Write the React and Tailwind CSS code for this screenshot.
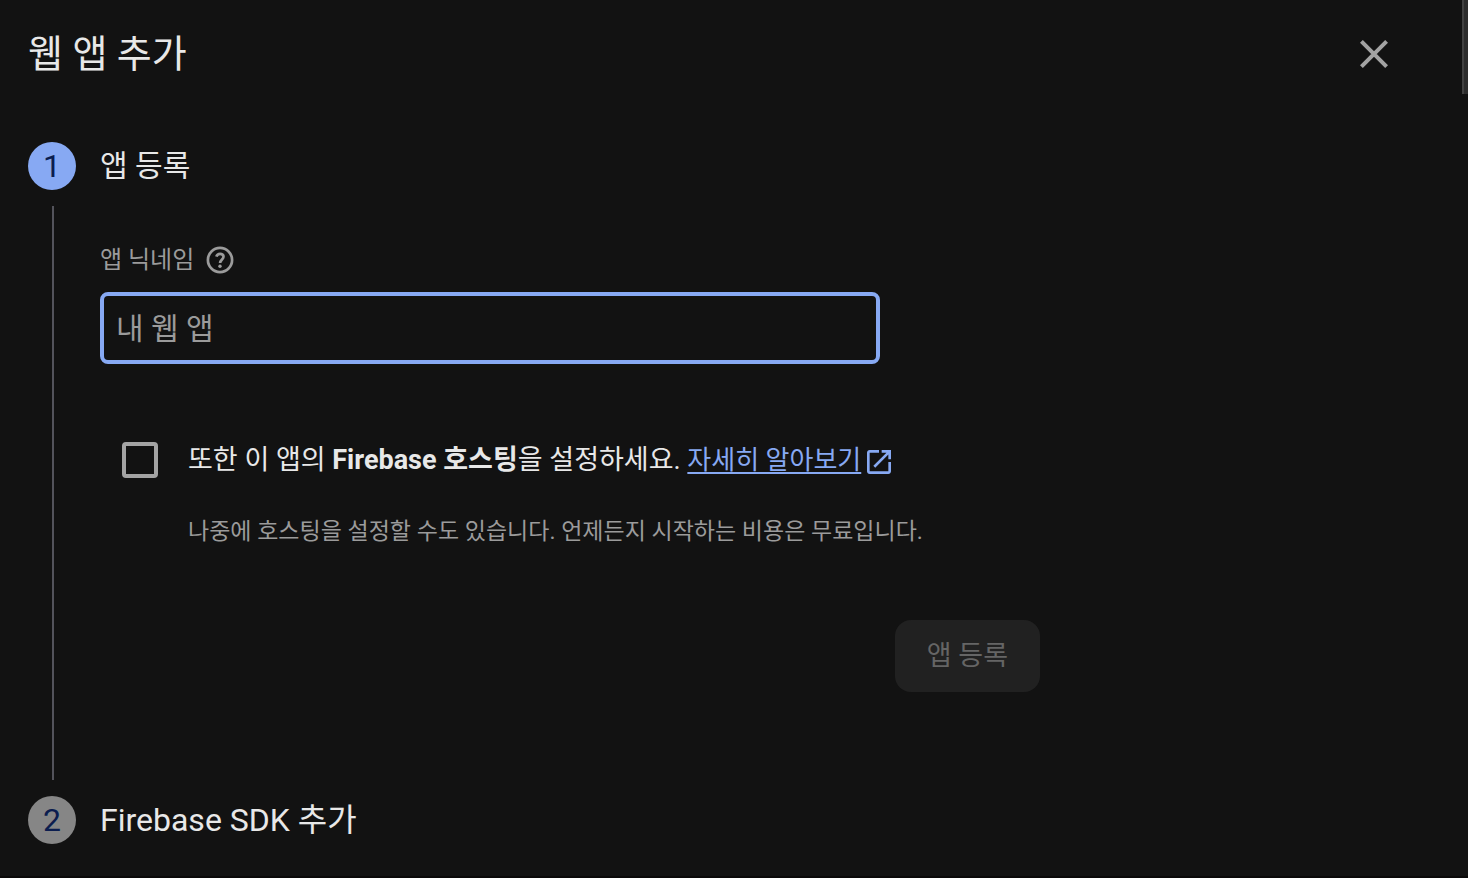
import React from "react";

function StepBadge({ number, active }) {
  return (
    <span
      className={
        "flex size-12 shrink-0 items-center justify-center rounded-full text-[32px] leading-none text-[#0b1d4f] " +
        (active ? "bg-[#87a9f3]" : "bg-[#868686]")
      }
    >
      {number}
    </span>
  );
}

function CloseIcon() {
  return (
    <svg viewBox="0 0 28 28" className="size-7" fill="none" stroke="currentColor" strokeWidth="4" aria-hidden="true">
      <path d="M1.4 1.4 26.6 26.6M26.6 1.4 1.4 26.6" />
    </svg>
  );
}

function HelpIcon() {
  return (
    <svg viewBox="0 0 32 32" className="size-8" fill="none" stroke="currentColor" strokeWidth="2.7" aria-hidden="true">
      <circle cx="16" cy="16" r="12.1" />
      <path d="M12.400 12.700C12.900 10.800 14.200 9.800 16.100 9.800C18.200 9.800 19.500 11.100 19.500 12.800C19.500 15.300 16.100 15.700 16.100 19.100" />
      <circle cx="16" cy="22.200" r="1.700" fill="currentColor" stroke="none" />
    </svg>
  );
}

function ExternalIcon() {
  return (
    <svg viewBox="0 0 24 24" className="mt-1 size-8" fill="currentColor" aria-hidden="true">
      <path d="M19 19H5V5h7V3H5c-1.110 0-2 .9-2 2v14c0 1.100.89 2 2 2h14c1.100 0 2-.9 2-2v-7h-2v7zM14 3v2h3.590l-9.830 9.830 1.410 1.410L19 6.410V10h2V3h-7z" />
    </svg>
  );
}

export default function App() {
  return (
    <main className="relative min-h-screen border-b-2 border-[#0a0909] bg-[#121212] pb-8 font-[Roboto,'Noto_Sans_CJK_KR',sans-serif] text-[#e8e8e8]">
      <div className="absolute top-0 right-0 h-[94px] w-1.5 border-l-2 border-[#424242] bg-[#2d2d2d]" />

      <header className="flex h-27 items-center justify-between pr-[72px] pl-7">
        <h1 className="text-[38px] leading-[48px]">웹 앱 추가</h1>
        <button type="button" aria-label="닫기" className="flex size-11 items-center justify-center text-[#a3a3a3]">
          <CloseIcon />
        </button>
      </header>

      <ol className="px-7 pt-[34px]">
        <li className="flex gap-6">
          <div className="flex flex-col items-center gap-4 pb-4">
            <StepBadge number={1} active />
            <span className="ml-0.5 w-0.5 grow bg-[#53535b]" />
          </div>
          <form className="min-w-0 grow pb-[104px]" onSubmit={(e) => e.preventDefault()}>
            <h2 className="text-[30px] leading-[48px]">앱 등록</h2>

            <div className="mt-[50px] flex h-10 items-center gap-2.5 text-[#9b9b9b]">
              <label htmlFor="nickname" className="text-2xl">앱 닉네임</label>
              <button type="button" aria-label="도움말" className="flex">
                <HelpIcon />
              </button>
            </div>
            <input
              id="nickname"
              type="text"
              placeholder="내 웹 앱"
              className="mt-3 h-[72px] w-full max-w-[780px] rounded-lg border-4 border-[#87a9f3] bg-transparent px-3 text-[30px] outline-none placeholder:text-[#9b9b9b]"
            />

            <div className="mt-[76px] flex items-center pl-[22px]">
              <input
                id="hosting"
                type="checkbox"
                className="size-9 shrink-0 appearance-none rounded border-4 border-[#a3a3a3] checked:bg-[#87a9f3]"
              />
              <div className="ml-[30px] flex items-center text-[27px] leading-10">
                <label htmlFor="hosting" className="whitespace-pre">
                  또한 이 앱의 <strong className="font-bold">Firebase 호스팅</strong>을 설정하세요.{" "}
                </label>
                <a href="#learn-more" className="flex items-center gap-0.5 text-[26px] text-[#87a9f3]">
                  <span className="underline decoration-2 underline-offset-3">자세히 알아보기</span>
                  <ExternalIcon />
                </a>
              </div>
            </div>
            <p className="mt-8 pl-[88px] text-[23px] leading-10 text-[#9b9b9b]">
              나중에 호스팅을 설정할 수도 있습니다. 언제든지 시작하는 비용은 무료입니다.
            </p>

            <div className="mt-[68px] flex max-w-[940px] justify-end">
              <button type="submit" disabled className="h-[72px] rounded-2xl bg-[#212121] px-8 text-[27px] text-[#656565]">
                앱 등록
              </button>
            </div>
          </form>
        </li>
        <li className="flex gap-6">
          <StepBadge number={2} />
          <h2 className="text-[32px] leading-[48px]">Firebase SDK 추가</h2>
        </li>
      </ol>
    </main>
  );
}
